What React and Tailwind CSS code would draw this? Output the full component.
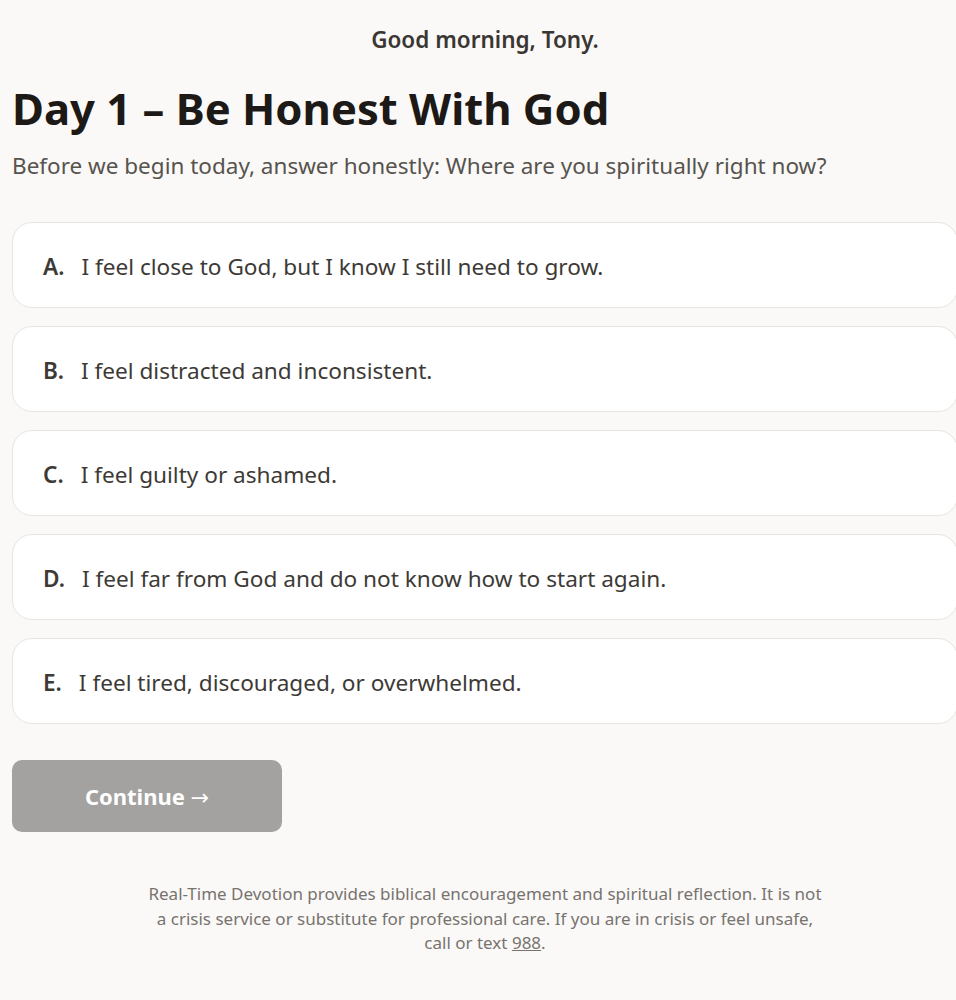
const options = [
  { key: "A", text: "I feel close to God, but I know I still need to grow." },
  { key: "B", text: "I feel distracted and inconsistent." },
  { key: "C", text: "I feel guilty or ashamed." },
  { key: "D", text: "I feel far from God and do not know how to start again." },
  { key: "E", text: "I feel tired, discouraged, or overwhelmed." },
];

const App = () => {
  return (
    <div className="min-h-[1000px] bg-[#faf9f7] overflow-hidden font-['Noto_Sans',sans-serif]">
      <div className="w-[946px] ml-3 pt-[23px]">
        {/* Greeting */}
        <p className="text-center text-[22.5px] font-semibold text-[#3a3733] leading-[34px]">
          Good morning, Tony.
        </p>

        {/* Title */}
        <h1 className="mt-[21px] text-[43.6px] font-bold text-[#1c1917] leading-[60px]">
          Day 1 – Be Honest With God
        </h1>
        <p className="mt-[12px] text-[22.5px] text-[#57534e] leading-[32px]">
          Before we begin today, answer honestly: Where are you spiritually right now?
        </p>

        {/* Options */}
        <div className="mt-[40px] flex flex-col gap-[18px]">
          {options.map((o) => (
            <button
              key={o.key}
              className="h-[86px] w-full flex items-center px-[30px] pt-[4px] bg-white border border-[#e7e5e2] rounded-[20px] text-left text-[22.6px] text-[#3d3a36]"
            >
              <span className="font-semibold mr-[17px]">{o.key}.</span>
              <span>{o.text}</span>
            </button>
          ))}
        </div>

        {/* Continue */}
        <button className="mt-[36px] w-[270px] h-[72px] pt-[2px] rounded-[10px] bg-[#a3a2a0] text-white text-[22px] font-bold">
          Continue <span className="font-['DejaVu_Sans',sans-serif] font-normal">→</span>
        </button>

        {/* Disclaimer */}
        <p className="mt-[50px] mx-auto max-w-[676px] text-center text-[17px] leading-[24.5px] text-[#77736e]">
          Real-Time Devotion provides biblical encouragement and spiritual reflection. It is not a crisis service or
          substitute for professional care. If you are in crisis or feel unsafe, call or text{" "}
          <span className="underline">988</span>.
        </p>
      </div>
    </div>
  );
};

export default App;
